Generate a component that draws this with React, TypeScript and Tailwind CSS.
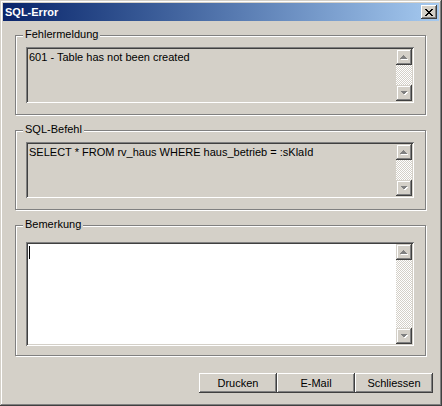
import React from "react";

const raised =
  "shadow-[inset_-1px_-1px_#404040,inset_1px_1px_#ffffff,inset_-2px_-2px_#808080,inset_2px_2px_#d4d0c8]";
const sunken =
  "shadow-[inset_1px_1px_#808080,inset_-1px_-1px_#ffffff,inset_2px_2px_#404040,inset_-2px_-2px_#d4d0c8]";
const scrollBtn =
  "shadow-[inset_-1px_-1px_#404040,inset_1px_1px_#d4d0c8,inset_-2px_-2px_#808080,inset_2px_2px_#ffffff]";

function Arrow({ down }: { down?: boolean }) {
  const pts = down ? "4,6 11,6 7.5,9.5" : "4,9.5 11,9.5 7.5,6";
  const sh = down ? "5,7 12,7 8.5,10.5" : "5,10.5 12,10.5 8.5,7";
  return (
    <svg width="16" height="16" viewBox="0 0 16 16" shapeRendering="crispEdges">
      <polygon points={sh} fill="#ffffff" />
      <polygon points={pts} fill="#808080" />
    </svg>
  );
}

function Scrollbar() {
  return (
    <div className="flex w-[16px] flex-col">
      <div className={`h-[16px] bg-[#d4d0c8] ${scrollBtn}`}>
        <Arrow />
      </div>
      <div className="flex-1 bg-[image:repeating-conic-gradient(#ffffff_0_25%,#d4d0c8_0_50%)] bg-size-[2px_2px]" />
      <div className={`h-[16px] bg-[#d4d0c8] ${scrollBtn}`}>
        <Arrow down />
      </div>
    </div>
  );
}

function Group({
  label,
  height,
  padTop,
  children,
}: {
  label: string;
  height: string;
  padTop: string;
  children: React.ReactNode;
}) {
  return (
    <div
      className={`relative w-[411px] border border-[#808080] shadow-[inset_1px_1px_#ffffff,1px_1px_#ffffff] ${height} ${padTop} pl-[10px]`}
    >
      <span className="absolute -top-[8px] left-[7px] bg-[#d4d0c8] px-[2px] leading-[13px]">
        {label}
      </span>
      {children}
    </div>
  );
}

function Field({
  text,
  height,
  white,
  caret,
}: {
  text?: string;
  height: string;
  white?: boolean;
  caret?: boolean;
}) {
  return (
    <div
      className={`flex w-[388px] p-[2px] ${height} ${sunken} ${white ? "bg-white" : "bg-[#d4d0c8]"}`}
    >
      <div className="flex-1 pl-[1px] pt-[2px] leading-[13px] whitespace-pre">
        {text}
        {caret && <span className="block h-[13px] w-[1px] bg-black" />}
      </div>
      <Scrollbar />
    </div>
  );
}

export default function App() {
  return (
    <div
      className="flex h-[406px] w-[442px] flex-col bg-[#d4d0c8] p-[3px] text-[11px] text-black shadow-[inset_-1px_-1px_#404040,inset_1px_1px_#d4d0c8,inset_-2px_-2px_#808080,inset_2px_2px_#ffffff]"
      style={{ fontFamily: '"Liberation Sans", Arial, sans-serif' }}
    >
      <div className="flex h-[18px] items-center justify-between bg-linear-to-r from-[#0a246a] to-[#a6caf0] px-[2px]">
        <span className="text-[11px] font-bold text-white">SQL-Error</span>
        <div
          className={`flex h-[14px] w-[16px] items-center justify-center bg-[#d4d0c8] ${raised}`}
        >
          <svg width="8" height="7" viewBox="0 0 8 7" shapeRendering="crispEdges">
            <path
              d="M0 0h2v1h-2zM6 0h2v1h-2zM1 1h2v1h-2zM5 1h2v1h-2zM2 2h4v1h-4zM3 3h2v1h-2zM2 4h4v1h-4zM1 5h2v1h-2zM5 5h2v1h-2zM0 6h2v1h-2zM6 6h2v1h-2z"
              fill="#000"
            />
          </svg>
        </div>
      </div>

      <div className="flex flex-1 flex-col px-[12px] pt-[14px]">
        <Group label="Fehlermeldung" height="h-[80px]" padTop="pt-[11px]">
          <Field text="601 - Table has not been created" height="h-[56px]" />
        </Group>
        <div className="h-[15px]" />
        <Group label="SQL-Befehl" height="h-[80px]" padTop="pt-[11px]">
          <Field
            text="SELECT * FROM rv_haus WHERE haus_betrieb = :sKlaId"
            height="h-[56px]"
          />
        </Group>
        <div className="h-[15px]" />
        <Group label="Bemerkung" height="h-[131px]" padTop="pt-[16px]">
          <Field height="h-[104px]" white caret />
        </Group>

        <div className="mt-[17px] flex justify-end">
          <div className="mr-[-6px] flex">
            {["Drucken", "E-Mail", "Schliessen"].map((b) => (
              <div
                key={b}
                className={`flex h-[20px] w-[78px] items-center justify-center ${raised}`}
              >
                {b}
              </div>
            ))}
          </div>
        </div>
      </div>
    </div>
  );
}
